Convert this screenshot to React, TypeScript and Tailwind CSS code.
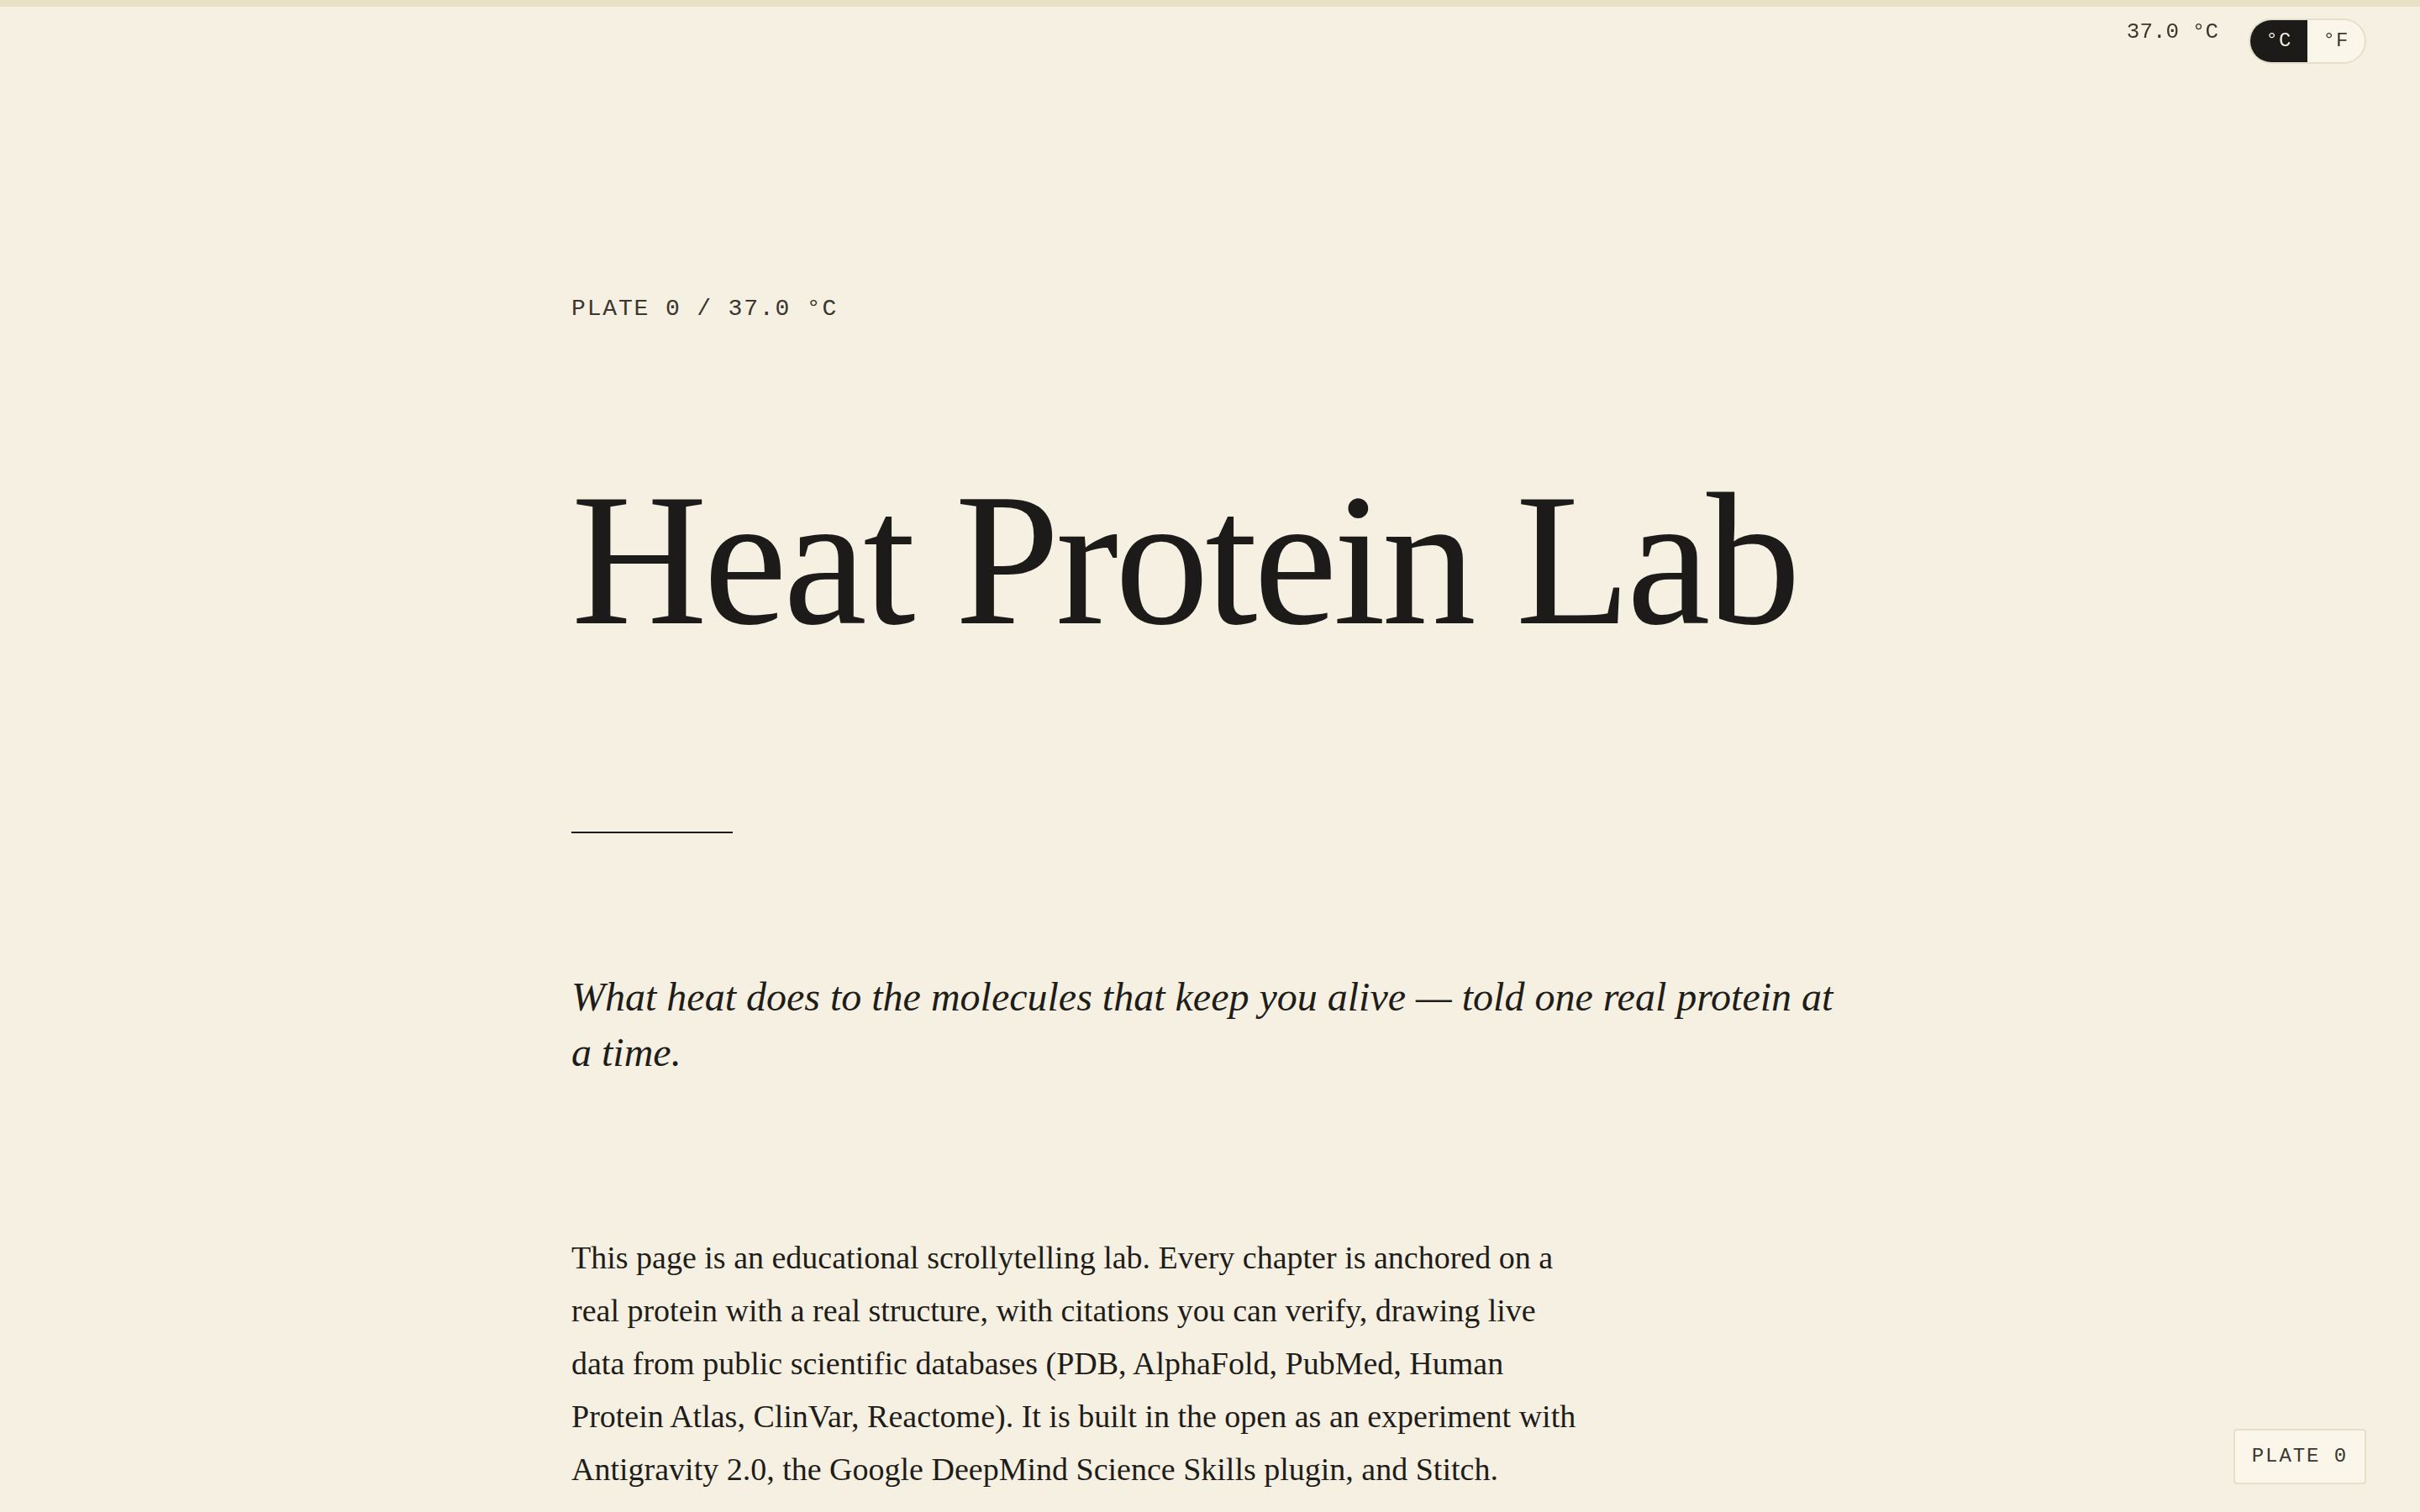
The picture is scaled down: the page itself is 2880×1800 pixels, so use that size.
import { useState } from "react";

const mono = "font-['Liberation_Mono','DejaVu_Sans_Mono',monospace]";
const serif = "font-['Liberation_Serif','Times_New_Roman',serif]";

function UnitToggle() {
  const [unit, setUnit] = useState<"C" | "F">("C");
  return (
    <div className="flex h-[54px] overflow-hidden rounded-full border-2 border-[#e6dfc9] bg-[#fbf6ea]">
      {(["C", "F"] as const).map((u) => (
        <button
          key={u}
          onClick={() => setUnit(u)}
          className={`${mono} flex w-[68px] items-center justify-center text-[24px] tracking-[0.05em] ${
            unit === u ? "bg-[#1c1b19] text-[#f5f0e1]" : "text-[#3a3630]"
          }`}
        >
          °{u}
        </button>
      ))}
    </div>
  );
}

export default function App() {
  return (
    <div className="relative h-screen overflow-hidden bg-[#f5f0e1] text-[#1c1b19]">
      <div className="fixed inset-x-0 top-0 h-2 bg-[#e8e1c8]" />

      <header className="fixed right-16 top-[22px] flex items-start gap-9">
        <span className={`${mono} text-[26px] leading-8 text-[#3a3630]`}>37.0 °C</span>
        <UnitToggle />
      </header>

      <main className="mx-auto w-[1520px] pt-[348px]">
        <p className={`${mono} text-[28px] leading-10 tracking-[0.066em] text-[#3a3630]`}>
          PLATE 0 / 37.0 °C
        </p>

        <h1 className={`${serif} mt-[166px] text-[224px] leading-none tracking-[-0.02em] text-[#1c1b19]`}>
          Heat Protein Lab
        </h1>

        <div className="mt-[212px] h-[2px] w-48 bg-[#1c1b19]" />

        <p className={`${serif} mt-[162px] text-[48px] leading-[66px] italic text-[#1f1d1a]`}>
          What heat does to the molecules that keep you alive — told one real protein at a time.
        </p>

        <p className={`${serif} mt-[180px] max-w-[1212px] text-[38px] leading-[63px] text-[#1f1d1a]`}>
          This page is an educational scrollytelling lab. Every chapter is anchored on a real
          protein with a real structure, with citations you can verify, drawing live data from
          public scientific databases (PDB, AlphaFold, PubMed, Human Protein Atlas, ClinVar,
          Reactome). It is built in the open as an experiment with Antigravity 2.0, the Google
          DeepMind Science Skills plugin, and Stitch.
        </p>
      </main>

      <div
        className={`${mono} fixed bottom-[33px] right-16 flex h-[66px] items-center rounded border-2 border-[#e6dfc9] bg-[#fbf6ea] px-5 text-[24px] tracking-[0.08em] text-[#3a3630]`}
      >
        PLATE 0
      </div>
    </div>
  );
}
